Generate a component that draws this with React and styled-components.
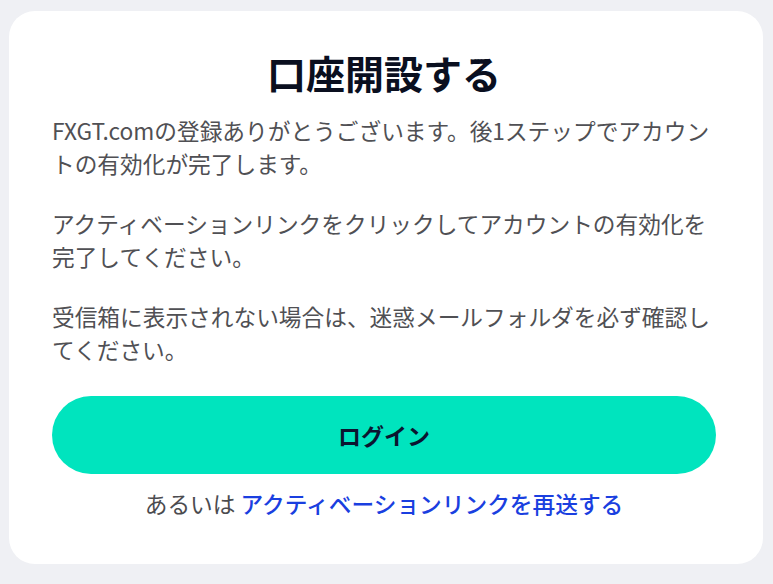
import styled, { createGlobalStyle } from "styled-components";

const GlobalStyle = createGlobalStyle`
	html, body {
		margin: 0;
		padding: 0;
		background: #eff0f4;
	}
	body {
		font-family: "Noto Sans CJK JP", "Noto Sans", sans-serif;
	}
`;

function App() {
	return (
		<>
			<GlobalStyle />
			<Page>
				<Card>
					<Title>口座開設する</Title>
					<Text>
						FXGT.comの登録ありがとうございます。後1ステップでアカウントの有効化が完了します。
					</Text>
					<Text>
						アクティベーションリンクをクリックしてアカウントの有効化を完了してください。
					</Text>
					<Text $last>
						受信箱に表示されない場合は、迷惑メールフォルダを必ず確認してください。
					</Text>
					<LoginButton type='button'>ログイン</LoginButton>
					<Footer>
						あるいは <Link href='#'>アクティベーションリンクを再送する</Link>
					</Footer>
				</Card>
			</Page>
		</>
	);
}

export default App;

const Page = styled.div`
	padding: 11px 10px 20px 9px;
`;

const Card = styled.div`
	background: #ffffff;
	border-radius: 26px;
	padding: 36px 47px 44px 43px;
	display: flex;
	flex-direction: column;
`;

const Title = styled.h1`
	margin: 0 0 17px;
	text-align: center;
	font-size: 39px;
	line-height: 50px;
	font-weight: 700;
	color: #0a0f1f;
`;

// max-width keeps the line breaks where the original puts them
const Text = styled.p`
	margin: 0 0 ${(p) => (p.$last ? "30px" : "27px")};
	max-width: 658px;
	font-size: 22.7px;
	line-height: 33px;
	color: #505054;
`;

const LoginButton = styled.button`
	height: 78px;
	border: none;
	border-radius: 39px;
	background: #00e4be;
	font-family: inherit;
	font-size: 23px;
	font-weight: 700;
	color: #0b1530;
	cursor: pointer;
`;

const Footer = styled.div`
	margin-top: 13px;
	text-align: center;
	font-size: 22.7px;
	line-height: 33px;
	color: #4b4b4f;
`;

const Link = styled.a`
	color: #1a3fe0;
	font-weight: 500;
	text-decoration: none;
`;
